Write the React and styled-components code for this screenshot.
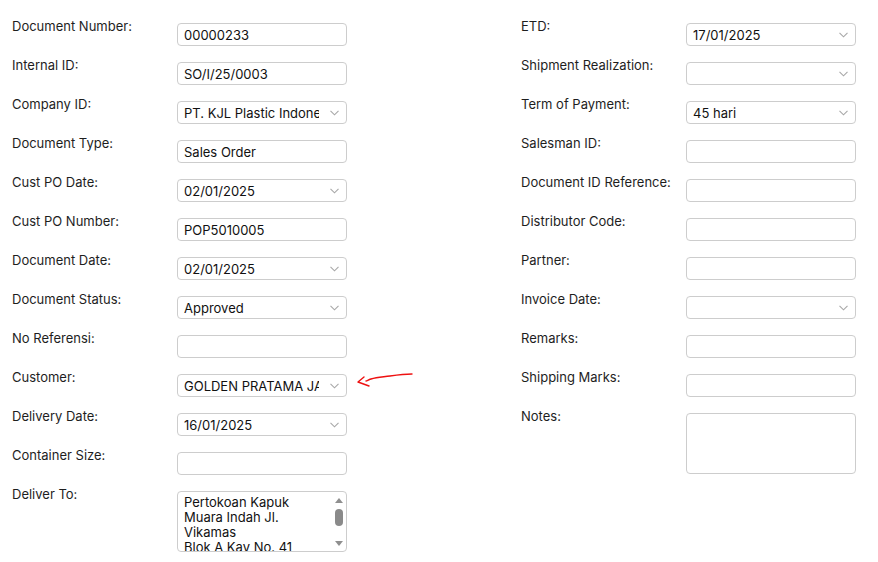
import styled, { createGlobalStyle } from 'styled-components'

const GlobalStyle = createGlobalStyle`
  body {
    margin: 0;
    background: #fff;
    font-family: Inter, "Noto Sans", sans-serif;
    color: #1e1e1e;
  }
`
const Page = styled.div`
  display: grid;
  grid-template-columns: 335px 335px;
  column-gap: 174px;
  padding: 18px 12px 0 12px;
`
const Column = styled.div`
  display: flex;
  flex-direction: column;
  gap: 11px;
`
const Row = styled.div`
  display: grid;
  grid-template-columns: 165px 170px;
  align-items: start;
`
const Label = styled.div`
  font-size: 13px;
  line-height: 16px;
`
const boxBase = `
  box-sizing: border-box;
  width: 170px;
  margin-top: 5px;
  border: 1px solid #cdcdcd;
  border-radius: 4px;
  background: #fff;
  font-family: Inter, "Noto Sans", sans-serif;
  font-size: 13px;
  color: #111;
`
const TextInput = styled.input`
  ${boxBase}
  height: 23px;
  padding: 0 6px;
  outline: none;
  display: block;
`
const SelectBox = styled.div`
  ${boxBase}
  height: 23px;
  display: flex;
  align-items: center;
  padding: 0 6px;
  gap: 11px;
`
const SelectValue = styled.span`
  flex: 1;
  overflow: hidden;
  white-space: nowrap;
`
const Chevron = styled.svg`
  flex: none;
  width: 9px;
  height: 6px;
  margin-right: 1px;
`
const Area = styled.div`
  ${boxBase}
  height: 61px;
  display: flex;
  overflow: hidden;
`
const AreaText = styled.div`
  flex: 1;
  padding: 3px 6px;
  line-height: 15px;
`
const Scrollbar = styled.div`
  width: 15px;
  display: flex;
  flex-direction: column;
  align-items: center;
  padding: 6px 0 5px;
`
const Thumb = styled.div`
  width: 8px;
  height: 17px;
  margin-top: 6px;
  border-radius: 4px;
  background: #8a8a8a;
`
const Spacer = styled.div`
  flex: 1;
`
const Tri = styled.div`
  width: 0;
  height: 0;
  border-left: 4px solid transparent;
  border-right: 4px solid transparent;
  ${(p) => (p.$down ? 'border-top: 5px solid #8f8f8f;' : 'border-bottom: 5px solid #8f8f8f;')}
`
const FieldWrap = styled.div`
  position: relative;
`
const Arrow = styled.svg`
  position: absolute;
  left: 178px;
  top: 0px;
  width: 60px;
  height: 24px;
`

function Select({ value }) {
  return (
    <SelectBox>
      <SelectValue>{value}</SelectValue>
      <Chevron viewBox="0 0 9 6">
        <path d="M0.5 0.8 L4.5 4.8 L8.5 0.8" fill="none" stroke="#a8a8a8" strokeWidth="1.1" />
      </Chevron>
    </SelectBox>
  )
}

function Field({ f }) {
  if (f.type === 'select') return <Select value={f.value} />
  if (f.type === 'area') return <Area><AreaText>{f.value}</AreaText></Area>
  if (f.type === 'scroll')
    return (
      <Area>
        <AreaText>{f.value}</AreaText>
        <Scrollbar>
          <Tri />
          <Thumb />
          <Spacer />
          <Tri $down />
        </Scrollbar>
      </Area>
    )
  return <TextInput readOnly value={f.value || ''} />
}

const left = [
  { label: 'Document Number:', value: '00000233' },
  { label: 'Internal ID:', value: 'SO/I/25/0003' },
  { label: 'Company ID:', type: 'select', value: 'PT. KJL Plastic Indonesia' },
  { label: 'Document Type:', value: 'Sales Order' },
  { label: 'Cust PO Date:', type: 'select', value: '02/01/2025' },
  { label: 'Cust PO Number:', value: 'POP5010005' },
  { label: 'Document Date:', type: 'select', value: '02/01/2025' },
  { label: 'Document Status:', type: 'select', value: 'Approved' },
  { label: 'No Referensi:' },
  { label: 'Customer:', type: 'select', value: 'GOLDEN PRATAMA JAYA', arrow: true },
  { label: 'Delivery Date:', type: 'select', value: '16/01/2025' },
  { label: 'Container Size:' },
  {
    label: 'Deliver To:',
    type: 'scroll',
    value: (
      <>
        Pertokoan Kapuk<br />Muara Indah Jl.<br />Vikamas<br />Blok A Kav No. 41
      </>
    ),
  },
]

const right = [
  { label: 'ETD:', type: 'select', value: '17/01/2025' },
  { label: 'Shipment Realization:', type: 'select', value: '' },
  { label: 'Term of Payment:', type: 'select', value: '45 hari' },
  { label: 'Salesman ID:' },
  { label: 'Document ID Reference:' },
  { label: 'Distributor Code:' },
  { label: 'Partner:' },
  { label: 'Invoice Date:', type: 'select', value: '' },
  { label: 'Remarks:' },
  { label: 'Shipping Marks:' },
  { label: 'Notes:', type: 'area', value: '' },
]

function FormColumn({ fields }) {
  return (
    <Column>
      {fields.map((f) => (
        <Row key={f.label}>
          <Label>{f.label}</Label>
          <FieldWrap>
            <Field f={f} />
            {f.arrow && (
              <Arrow viewBox="0 0 60 24">
                <path
                  d="M57 5 C50 5 42 6 35 7 C28 8 22 8 16 10 C13 11 12 12 11 12"
                  fill="none"
                  stroke="#e11"
                  strokeWidth="1.4"
                  strokeLinecap="round"
                />
                <path
                  d="M9 8 L3 13 L14 17"
                  fill="none"
                  stroke="#e11"
                  strokeWidth="1.4"
                  strokeLinecap="round"
                  strokeLinejoin="round"
                />
              </Arrow>
            )}
          </FieldWrap>
        </Row>
      ))}
    </Column>
  )
}

export default function App() {
  return (
    <>
      <GlobalStyle />
      <Page>
        <FormColumn fields={left} />
        <FormColumn fields={right} />
      </Page>
    </>
  )
}
